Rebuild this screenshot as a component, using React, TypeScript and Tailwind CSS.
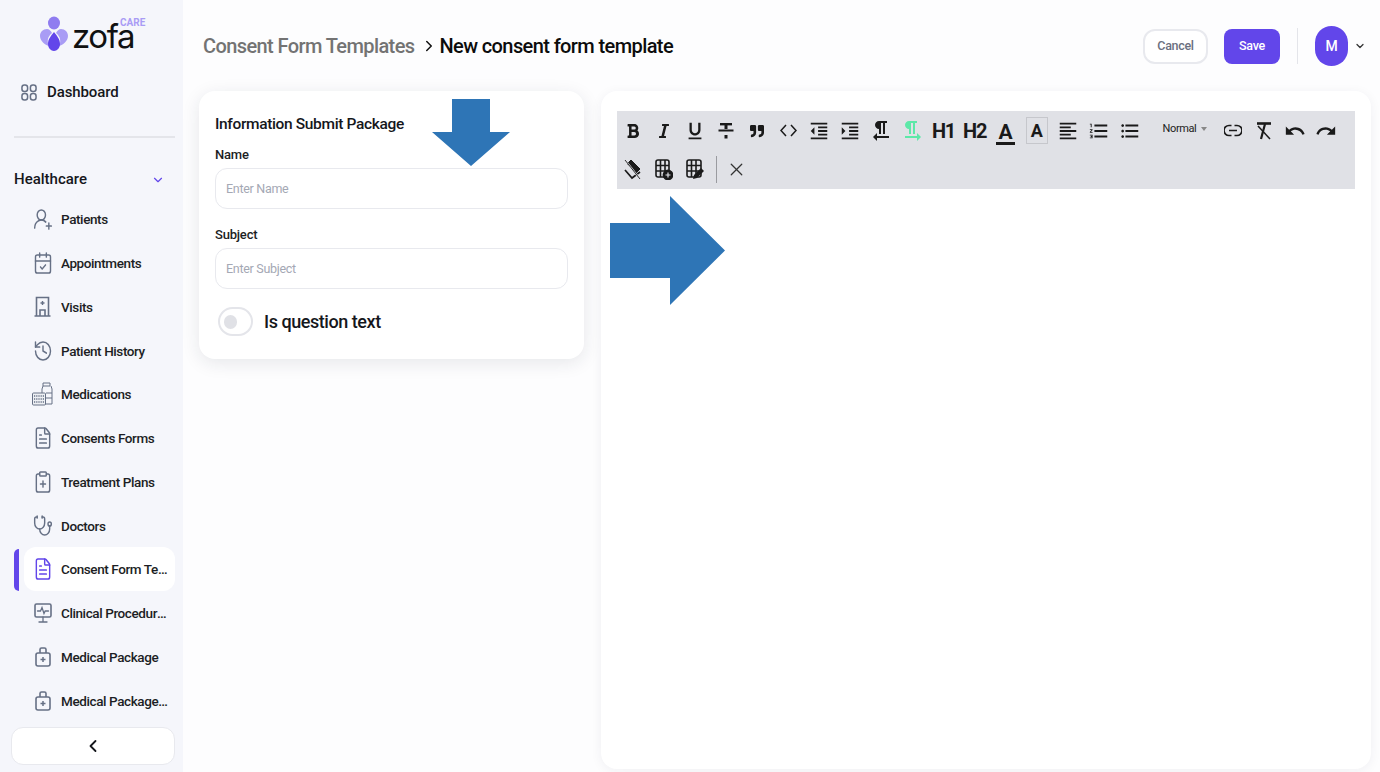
import { CalendarCheck, ChevronDown, ChevronLeft, ChevronRight, ClipboardPlus, FileText, History, Stethoscope, UserRoundPlus, X } from 'lucide-react';
import { FaBold, FaItalic, FaQuoteRight } from 'react-icons/fa';
import { MdFormatAlignLeft, MdFormatIndentDecrease, MdFormatIndentIncrease, MdFormatListBulleted, MdFormatListNumbered, MdFormatTextdirectionLToR, MdFormatTextdirectionRToL, MdFormatUnderlined, MdRedo, MdUndo } from 'react-icons/md';

const fontStack = { fontFamily: 'Roboto, "Noto Sans", sans-serif' };

function LogoMark() {
  return (
    <svg width="28" height="36" viewBox="0 0 28 36">
      <ellipse cx="14" cy="7" rx="6" ry="6.5" fill="#8f7cf0" />
      <path d="M7 13c-4 0-7 3-7 7 0 5 5 9 9 10-2-4-2-9 3-13-1-2-3-4-5-4z" fill="#a99cf5" />
      <path d="M21 13c4 0 7 3 7 7 0 5-5 9-9 10 2-4 2-9-3-13 1-2 3-4 5-4z" fill="#a99cf5" />
      <path d="M14 16c3 4 6 7 6 12 0 4-3 7-6 7s-6-3-6-7c0-5 3-8 6-12z" fill="#6246ea" />
    </svg>
  );
}

function DashboardIcon() {
  return (
    <svg width="16" height="17" viewBox="0 0 17 18" fill="none" stroke="#667085" strokeWidth="1.6">
      <rect x="1" y="1" width="6" height="7" rx="2.6" />
      <rect x="10" y="1" width="6" height="7" rx="2.6" />
      <rect x="1" y="10" width="6" height="7" rx="2.6" />
      <rect x="10" y="10" width="6" height="7" rx="2.6" />
    </svg>
  );
}

function VisitsIcon() {
  return (
    <svg width="17" height="21" viewBox="0 0 17 21" fill="none" stroke="#667085" strokeWidth="1.6">
      <path d="M2.5 20V1.5h12V20M0.5 20h16" />
      <path d="M8.5 5v4M6.5 7h4" strokeWidth="1.4" />
      <path d="M6 20v-6h5v6" />
    </svg>
  );
}

function MedicationsIcon() {
  return (
    <svg width="21" height="24" viewBox="0 0 21 24" fill="none" stroke="#667085" strokeWidth="1">
      <path d="M11 1h7v3h-7zM11 4l-1 3v15h10V7l-1-3" />
      <path d="M14 11h6M14 16h6" />
      <rect x="0.5" y="11" width="13" height="12" rx="1" fill="#eef0f4" />
      <path d="M2 14h10M2 17h10M2 20h10" strokeDasharray="1.2 1" strokeWidth="1.4" />
    </svg>
  );
}

function ClinicalIcon() {
  return (
    <svg width="18" height="20" viewBox="0 0 18 20" fill="none" stroke="#667085" strokeWidth="1.6" strokeLinecap="round">
      <rect x="1" y="1" width="16" height="13" rx="1.5" />
      <path d="M9 14v5M5 19h8M3.5 8h3l1.5-3.5 2 6 1.2-2.5h3.3" strokeWidth="1.3" />
    </svg>
  );
}

function PackageIcon() {
  return (
    <svg width="16" height="20" viewBox="0 0 16 20" fill="none" stroke="#667085" strokeWidth="1.6">
      <rect x="1" y="6" width="14" height="13" rx="2" />
      <path d="M5 6V2.5A1.5 1.5 0 0 1 6.5 1h3A1.5 1.5 0 0 1 11 2.5V6" />
      <path d="M8 10v5M5.5 12.5h5" strokeWidth="1.5" />
    </svg>
  );
}

const menuIcon = { width: 20, height: 24, preserveAspectRatio: 'none', color: '#667085', strokeWidth: 1.7 };

const menuItems = [
  { label: 'Patients', icon: <UserRoundPlus {...menuIcon} /> },
  { label: 'Appointments', icon: <CalendarCheck {...menuIcon} /> },
  { label: 'Visits', icon: <VisitsIcon /> },
  { label: 'Patient History', icon: <History {...menuIcon} /> },
  { label: 'Medications', icon: <MedicationsIcon /> },
  { label: 'Consents Forms', icon: <FileText {...menuIcon} /> },
  { label: 'Treatment Plans', icon: <ClipboardPlus {...menuIcon} /> },
  { label: 'Doctors', icon: <Stethoscope {...menuIcon} /> },
  { label: 'Consent Form Templates', icon: <FileText {...menuIcon} color="#6246ea" />, active: true },
  { label: 'Clinical Procedures', icon: <ClinicalIcon /> },
  { label: 'Medical Package', icon: <PackageIcon /> },
  { label: 'Medical Package Items', icon: <PackageIcon /> },
];

function Sidebar() {
  return (
    <aside className="w-[183px] h-[772px] shrink-0 bg-[#f5f6fb] flex flex-col overflow-hidden">
      <div className="h-[70px] flex items-start pl-[40px] pt-[16px] gap-[4px]">
        <LogoMark />
        <div className="relative">
          <span className="block text-[33px] leading-[40px] text-[#111] font-normal tracking-[-1.4px]" style={{ fontFamily: 'Inter, sans-serif' }}>zofa</span>
          <span className="absolute left-[48px] top-[1px] text-[10px] leading-[12px] font-bold text-[#a99cf5]">CARE</span>
        </div>
      </div>
      <div className="h-[44px] flex items-center pl-[21px] gap-[10px]">
        <DashboardIcon />
        <span className="text-[15px] font-medium text-[#15171c] tracking-[-0.1px]">Dashboard</span>
      </div>
      <div className="mx-[14px] mt-[22px] h-[1.5px] w-[161px] bg-[#e4e5ea]" />
      <div className="h-[40px] mt-[22px] pl-[14px] pr-[18px] flex items-center justify-between">
        <span className="text-[15px] font-medium text-[#15171c]">Healthcare</span>
        <ChevronDown size={14} color="#6246ea" />
      </div>
      <div className="mt-[-2px] flex flex-col">
        {menuItems.map(item => (
          <div key={item.label} className="relative h-[43.75px] flex items-center">
            {item.active && <div className="absolute left-[14px] top-[1px] w-[5px] h-[42px] rounded-l-md bg-[#6246ea]" />}
            <div className={`ml-[24px] w-[151px] h-[44px] flex items-center rounded-xl ${item.active ? 'bg-white' : ''}`}>
              <div className="w-[37px] flex justify-center shrink-0">{item.icon}</div>
              <span className="text-[13.5px] font-medium tracking-[-0.4px] text-[#1c1e24] truncate w-[107px]">{item.label}</span>
            </div>
          </div>
        ))}
      </div>
      <div className="mx-[11px] mt-[4.5px] h-[38px] w-[164px] bg-white border border-[#e8e9ee] rounded-xl flex items-center justify-center">
        <ChevronLeft size={20} color="#15171c" strokeWidth={2.2} />
      </div>
    </aside>
  );
}

function Btn({ children, className = '' }: { children: React.ReactNode; className?: string }) {
  return <div className={`w-[31.1px] h-[39px] shrink-0 flex items-center justify-center text-[#1a1a1a] ${className}`}>{children}</div>;
}

function Toolbar() {
  return (
    <div className="w-[738px] h-[78px] bg-[#e0e1e6] flex flex-col">
      <div className="flex h-[39px]">
        <Btn><FaBold size={16} /></Btn>
        <Btn><FaItalic size={16} /></Btn>
        <Btn><MdFormatUnderlined size={22} /></Btn>
        <Btn>
          <svg width="16" height="18" viewBox="0 0 16 18" fill="#1a1a1a"><rect x="2" y="1" width="12" height="2.4" /><rect x="0.5" y="7.5" width="15" height="2" /><rect x="6.5" y="3" width="3" height="4" /><rect x="6.5" y="13" width="3" height="3.5" /></svg>
        </Btn>
        <Btn><FaQuoteRight size={14} /></Btn>
        <Btn>
          <svg width="17" height="13" viewBox="0 0 17 13" fill="none" stroke="#1a1a1a" strokeWidth="1.5"><path d="M6 1 1 6.5 6 12M11 1l5 5.5-5 5.5" /></svg>
        </Btn>
        <Btn><MdFormatIndentDecrease size={22} /></Btn>
        <Btn><MdFormatIndentIncrease size={22} /></Btn>
        <Btn><MdFormatTextdirectionRToL size={24} /></Btn>
        <Btn><MdFormatTextdirectionLToR size={24} color="#5de8a8" /></Btn>
        <Btn><span className="text-[20px] font-bold leading-none tracking-[-1.2px]">H1</span></Btn>
        <Btn><span className="text-[20px] font-bold leading-none tracking-[-1.2px]">H2</span></Btn>
        <Btn>
          <span className="block text-[21px] leading-[19px] font-bold border-b-[3px] border-[#1a1a1a] w-[19px] text-center mt-[6px]">A</span>
        </Btn>
        <Btn><span className="w-[22px] h-[27px] border border-[#c6c7cc] flex items-center justify-center text-[18px] font-bold">A</span></Btn>
        <Btn><MdFormatAlignLeft size={22} /></Btn>
        <Btn><MdFormatListNumbered size={22} /></Btn>
        <Btn><MdFormatListBulleted size={22} /></Btn>
        <div className="w-[72px] h-[39px] shrink-0 flex items-center pl-[17px] gap-[5px]">
          <span className="text-[11px] font-normal text-[#222] tracking-[-0.4px] -mt-[3px]">Normal</span>
          <span className="w-0 h-0 border-x-[3.5px] border-x-transparent border-t-[4px] border-t-[#888] -mt-[3px]" />
        </div>
        <Btn>
          <svg width="18" height="13" viewBox="0 0 18 13" fill="none" stroke="#1a1a1a" strokeWidth="1.7"><path d="M7.5 1.5H5a5 5 0 0 0 0 10h2.5M10.5 1.5H13a5 5 0 0 1 0 10h-2.5M5 6.5h8" /></svg>
        </Btn>
        <Btn>
          <svg width="16" height="18" viewBox="0 0 16 18" fill="none" stroke="#1a1a1a"><path d="M1 1.5h14" strokeWidth="2.6" /><path d="M9 2 5 17" strokeWidth="2.2" /><path d="M2 4l12 13" strokeWidth="1.5" /></svg>
        </Btn>
        <Btn><MdUndo size={22} /></Btn>
        <Btn><MdRedo size={22} /></Btn>
      </div>
      <div className="flex h-[39px]">
        <Btn>
          <svg width="17" height="21" viewBox="0 0 17 21" fill="none" stroke="#1a1a1a"><path d="M7 1l9 9-4 4-9-9z" fill="#1a1a1a" /><path d="M1 11l7 8 8-6" strokeWidth="1.7" /><path d="M1 1l15 19" strokeWidth="2" stroke="#e0e1e6" /><path d="M1 1l15 19" strokeWidth="0.9" /></svg>
        </Btn>
        <Btn>
          <svg width="18" height="21" viewBox="0 0 18 21" fill="none" stroke="#1a1a1a" strokeWidth="1.6"><rect x="1" y="1" width="13" height="17" rx="2" /><path d="M1 6.5h13M1 12h13M5.5 1v17M10 1v17" /><circle cx="13" cy="16" r="4.6" fill="#1a1a1a" /><path d="M13 13.5v5M10.5 16h5" stroke="#e0e1e6" strokeWidth="1.2" /></svg>
        </Btn>
        <Btn>
          <svg width="18" height="21" viewBox="0 0 18 21" fill="none" stroke="#1a1a1a" strokeWidth="1.6"><rect x="1" y="1" width="14" height="17" rx="2" /><path d="M1 6.5h14M1 12h14M5.5 1v17M10 1v17" /><path d="M7 20l1-4 7-7 3 3-7 7z" fill="#1a1a1a" stroke="none" /></svg>
        </Btn>
        <div className="w-[11px] h-[39px] flex items-center pl-[5.5px]"><div className="w-[1.5px] h-[27px] bg-[#9a9ba0]" /></div>
        <Btn><X size={21} color="#333" strokeWidth={1.4} /></Btn>
      </div>
    </div>
  );
}

function Field({ label, placeholder }: { label: string; placeholder: string }) {
  return (
    <div>
      <label className="block text-[13px] leading-[16px] font-medium tracking-[-0.2px] text-[#1c1e24] mb-[5px]">{label}</label>
      <input placeholder={placeholder} className="w-[353px] h-[41px] px-[10px] text-[12.5px] tracking-[-0.3px] border border-[#e8e9ee] rounded-xl bg-white placeholder:text-[#a4a8b4] outline-none" />
    </div>
  );
}

export default function App() {
  return (
    <div className="relative w-[1380px] h-[772px] flex bg-[#fdfdfe] overflow-hidden" style={fontStack}>
      <Sidebar />
      <main className="flex-1 flex flex-col min-w-0">
        <header className="h-[91px] shrink-0 flex items-center pt-[1px] pl-[20px] pr-[14px]">
          <span className="text-[20px] font-medium tracking-[-0.6px] text-[#737373]">Consent Form Templates</span>
          <ChevronRight size={18} color="#111" className="ml-[6px] mr-[1px]" />
          <span className="text-[20px] font-medium tracking-[-0.6px] text-[#0c0c0c]">New consent form template</span>
          <div className="ml-auto flex items-center">
            <button className="w-[65px] h-[35px] mt-[1px] border-2 border-[#e8e9ee] rounded-xl bg-white text-[12.5px] tracking-[-0.3px] font-medium text-[#6b7080]">Cancel</button>
            <button className="ml-[16px] w-[56px] h-[35px] mt-[1px] rounded-lg bg-[#6246ea] text-[12.5px] tracking-[-0.3px] font-medium text-white">Save</button>
            <div className="ml-[17px] w-[1px] h-[36px] bg-[#e4e5ea]" />
            <div className="ml-[17px] w-[33px] h-[40px] rounded-full bg-[#6246ea] flex items-center justify-center text-[14px] font-medium text-white">M</div>
            <ChevronDown size={12} color="#333" className="ml-[6px]" strokeWidth={2.5} />
          </div>
        </header>
        <div className="flex-1 flex items-start pl-[16px] gap-[17px]">
          <section className="w-[385px] h-[268px] bg-white rounded-2xl shadow-[0_4px_18px_rgba(30,35,60,0.1)] px-[16px] pt-[23px]">
            <h2 className="text-[15.5px] leading-[20px] font-medium tracking-[-0.35px] text-[#15171c] mb-[13px]">Information Submit Package</h2>
            <div className="flex flex-col gap-[18px]">
              <Field label="Name" placeholder="Enter Name" />
              <Field label="Subject" placeholder="Enter Subject" />
            </div>
            <div className="mt-[18px] ml-[3px] flex items-center gap-[11px]">
              <div className="w-[35px] h-[29px] rounded-full border-2 border-[#e4e5ea] bg-white flex items-center pl-[4px]">
                <div className="w-[13px] h-[14px] rounded-full bg-[#e0e1e6]" />
              </div>
              <span className="text-[18px] font-medium tracking-[-0.45px] text-[#15171c]">Is question text</span>
            </div>
          </section>
          <section className="w-[770px] h-[678px] bg-white rounded-2xl shadow-[0_2px_12px_rgba(30,35,60,0.06)] pl-[16px] pt-[20px]">
            <Toolbar />
          </section>
        </div>
      </main>
      <svg className="absolute left-[432px] top-[99px]" width="78" height="67" viewBox="0 0 78 67">
        <polygon points="20,0 58,0 58,33 78,33 39,67 0,33 20,33" fill="#2e75b6" />
      </svg>
      <svg className="absolute left-[610px] top-[196px]" width="115" height="109" viewBox="0 0 115 109">
        <polygon points="0,27 60,27 60,0 115,54.5 60,109 60,82 0,82" fill="#2e75b6" />
      </svg>
    </div>
  );
}
